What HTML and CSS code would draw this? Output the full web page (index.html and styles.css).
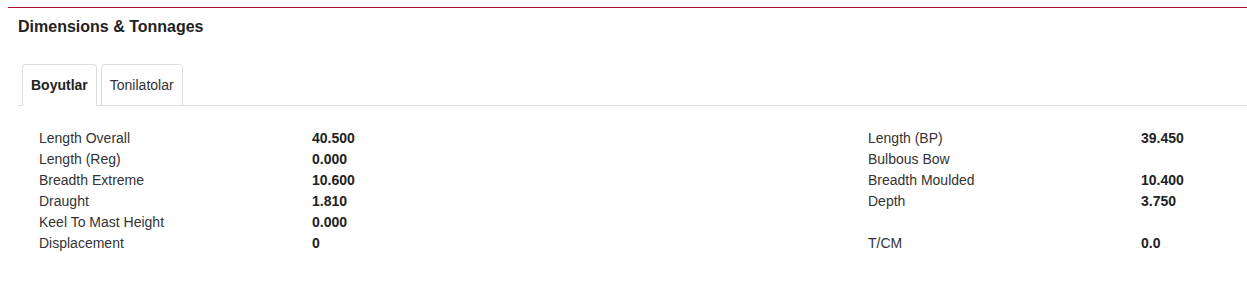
FILE: index.html
```html
<!DOCTYPE html>
<html lang="en">
<head>
<meta charset="utf-8">
<title>Dimensions &amp; Tonnages</title>
<link rel="stylesheet" href="styles.css">
</head>
<body>
<section class="panel">
  <h3 class="panel-title">Dimensions &amp; Tonnages</h3>
  <div class="tabs-wrap">
    <ul class="nav-tabs">
      <li class="tab active">Boyutlar</li>
      <li class="tab">Tonilatolar</li>
    </ul>
    <div class="tab-content">
      <div class="col">
        <div class="lbl">Length Overall</div><div class="val">40.500</div>
        <div class="lbl">Length (Reg)</div><div class="val">0.000</div>
        <div class="lbl">Breadth Extreme</div><div class="val">10.600</div>
        <div class="lbl">Draught</div><div class="val">1.810</div>
        <div class="lbl">Keel To Mast Height</div><div class="val">0.000</div>
        <div class="lbl">Displacement</div><div class="val">0</div>
      </div>
      <div class="col">
        <div class="lbl">Length (BP)</div><div class="val">39.450</div>
        <div class="lbl">Bulbous Bow</div><div class="val"></div>
        <div class="lbl">Breadth Moulded</div><div class="val">10.400</div>
        <div class="lbl">Depth</div><div class="val">3.750</div>
        <div class="lbl"></div><div class="val"></div>
        <div class="lbl">T/CM</div><div class="val">0.0</div>
      </div>
    </div>
  </div>
</section>
</body>
</html>
```
FILE: styles.css
```css
html, body {
  margin: 0;
  padding: 0;
  background: #fff;
}
body {
  font-family: "Liberation Sans", Arial, sans-serif;
  color: #333;
}
.panel {
  margin: 7px 0 0 8px;
  border-top: 1px solid #b01030;
  padding-left: 10px;
}
.panel-title {
  margin: 0;
  padding-top: 9px;
  font-size: 16px;
  line-height: 20px;
  font-weight: bold;
  color: #222;
}
.tabs-wrap {
  margin-top: 27px;
}
.nav-tabs {
  list-style: none;
  margin: 0;
  padding: 0 0 0 4px;
  display: flex;
  gap: 4px;
  border-bottom: 1px solid #ddd;
}
.tab {
  font-size: 14px;
  line-height: 20px;
  padding: 10px 8px;
  border: 1px solid #ddd;
  border-radius: 4px 4px 0 0;
  color: #333;
  margin-bottom: -1px;
  background: #fff;
}
.tab.active {
  font-weight: bold;
  color: #222;
  border-bottom-color: #fff;
}
.tab-content {
  display: grid;
  grid-template-columns: 829px 1fr;
  padding: 22px 0 0 21px;
}
.col {
  display: grid;
  grid-template-columns: 273px 1fr;
  grid-auto-rows: 21px;
  font-size: 14px;
  line-height: 21px;
}
.val {
  font-weight: bold;
  color: #222;
}
```
